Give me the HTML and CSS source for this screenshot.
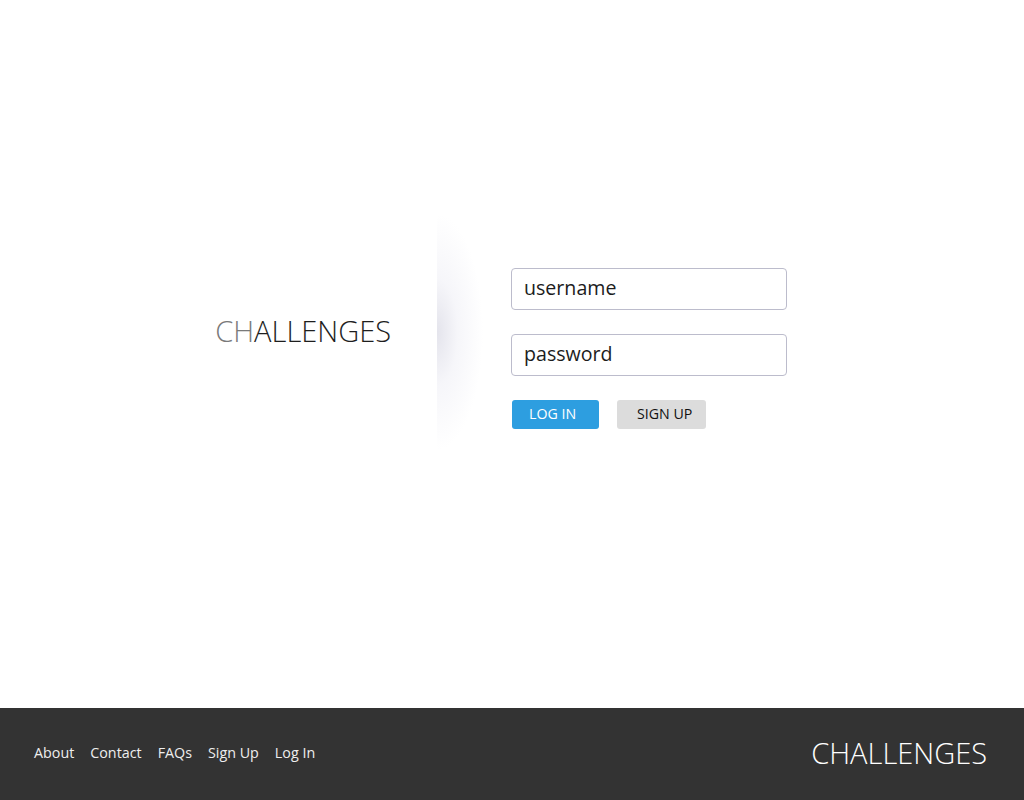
FILE: index.html
```html
<!DOCTYPE html>
<html lang="en">
<head>
<meta charset="utf-8">
<title>Challenges</title>
<link rel="stylesheet" href="styles.css">
</head>
<body>
<main class="main">
  <div class="row">
    <div class="brand-col">
      <h1 class="logo"><span class="logo-ch">CH</span>ALLENGES</h1>
    </div>
    <div class="form-col">
      <form class="login-form">
        <input class="field" type="text" placeholder="username">
        <input class="field" type="password" placeholder="password">
        <div class="actions">
          <button type="button" class="btn btn-primary">LOG IN</button>
          <button type="button" class="btn btn-secondary">SIGN UP</button>
        </div>
      </form>
    </div>
  </div>
</main>
<footer class="footer">
  <nav class="footer-nav">
    <a href="#">About</a>
    <a href="#">Contact</a>
    <a href="#">FAQs</a>
    <a href="#">Sign Up</a>
    <a href="#">Log In</a>
  </nav>
  <div class="footer-logo">CHALLENGES</div>
</footer>
</body>
</html>
```
FILE: styles.css
```css
* { box-sizing: border-box; }
html, body { margin: 0; padding: 0; }
body {
  font-family: "Open Sans", "Liberation Sans", sans-serif;
  background: #fff;
  color: #222;
}
.main {
  height: 708px;
  padding-top: 212px;
}
.row {
  display: flex;
  justify-content: center;
  height: 240px;
}
.brand-col {
  width: 250px;
  display: flex;
  align-items: center;
  justify-content: flex-end;
  padding-right: 46px;
}
.logo {
  margin: 0 0 2px 0;
  font-weight: 300;
  font-size: 29px;
  line-height: 40px;
  color: #1e1e1e;
}
.logo-ch { color: #7a7a7a; }
.form-col {
  width: 400px;
  padding-left: 74px;
  padding-top: 56px;
  background: radial-gradient(ellipse 46px 118px at 0 50%, rgba(228, 228, 236, 1) 0%, rgba(240, 240, 246, 0.6) 45%, rgba(255, 255, 255, 0) 100%) no-repeat;
}
.login-form {
  display: flex;
  flex-direction: column;
  gap: 24px;
  width: 276px;
}
.field {
  width: 276px;
  height: 42px;
  border: 1px solid #bcbccc;
  border-radius: 4px;
  padding: 0 12px 3px;
  font-family: "Open Sans", "Liberation Sans", sans-serif;
  font-size: 19.6px;
  color: #222;
  background: #fff;
  outline: none;
}
.field::placeholder { color: #1c1c1c; opacity: 1; }
.actions {
  display: flex;
  gap: 18px;
  padding-left: 1px;
}
.btn {
  height: 29px;
  border: none;
  border-radius: 3px;
  font-family: "Open Sans", "Liberation Sans", sans-serif;
  font-size: 14.2px;
  text-align: left;
  padding: 0 0 3px;
  cursor: pointer;
}
.btn-primary {
  width: 87px;
  padding-left: 17px;
  background: #2d9ee0;
  color: #fff;
}
.btn-secondary {
  width: 89px;
  padding-left: 20px;
  background: #dcdcdc;
  color: #111;
}
.footer {
  height: 92px;
  background: #333;
  display: flex;
  align-items: center;
  justify-content: space-between;
  padding: 0 37px 0 34px;
}
.footer-nav {
  display: flex;
  gap: 16px;
  margin-bottom: 3px;
}
.footer-nav a {
  color: #eee;
  text-decoration: none;
  font-size: 14.3px;
}
.footer-logo {
  color: #fff;
  font-weight: 300;
  font-size: 29px;
  line-height: 40px;
  margin-bottom: 3px;
}
```
